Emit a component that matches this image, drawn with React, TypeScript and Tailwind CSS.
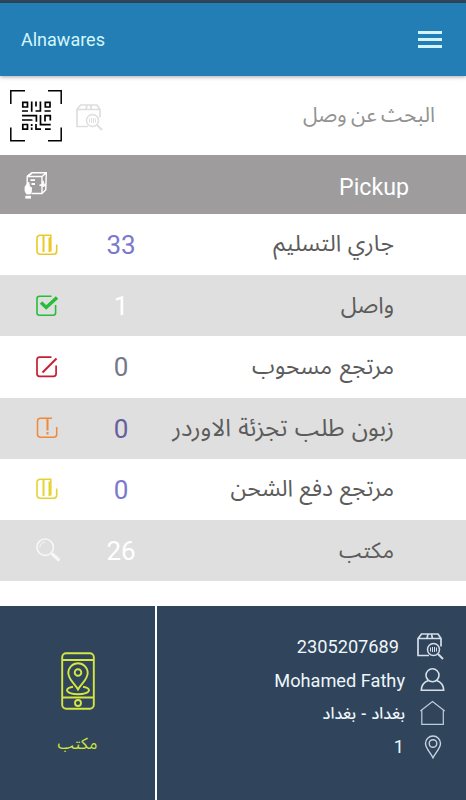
/**
 * Courier home screen: search bar, shipment status list and account footer.
 */

import type { ReactNode } from 'react';

type IconProps = { className?: string };

const QrScanIcon = ({ className = '' }: IconProps) => (
    <svg viewBox="0 0 52 52" className={className} fill="none" stroke="#000" strokeWidth="1.5">
        {/* Corner brackets */}
        <path d="M.8 14V.8H15M38 .8h13.200V14M51.200 37.500v13.200H38M15 50.700H.8V37.500" />
        {/* Code modules */}
        <g strokeWidth="1.700">
            <path d="M12.800 12.300h4.700v4.700h-4.700zM35.300 12.300h4.700v4.700h-4.700zM12.800 34.500h4.700v4.700h-4.700z" />
            <path d="M12 21h6M21.700 11.500v10.300M26 11.500v5M25.500 21h4.900V11.500M34.500 21h6.200" />
            <path d="M12 25.700h14.400v6M12 30h9.700v-.5M12 30h6M30.500 25v9.700h10.200M35 31.500v-5.800h5.300v4.800" />
            <path d="M21.700 34v2M21.700 37.500v2.500M26 34v5.200h5M35 39.200h5.700" />
        </g>
    </svg>
);

const BoxSearchIcon = ({ className = '' }: IconProps) => (
    <svg viewBox="0 0 28 28" className={className} fill="none" stroke="currentColor" strokeWidth="1.700">
        <path d="M13 23.500H2V6.500L5.500 2H22l3 4.500v8M2 6.500h23M11 6.500l1-4.500M16.500 6.500l-1-4.500" />
        <circle cx="17.500" cy="17.500" r="6" strokeWidth="1.500" />
        <path d="M22 22l5 5" strokeWidth="2" />
        <path d="M14.500 15.500v4M16.500 15v5M18.500 15v5M20.500 15.500v4" strokeWidth="1" />
    </svg>
);

const PickupIcon = ({ className = '' }: IconProps) => (
    <svg viewBox="0 0 24 28" className={className} fill="none" stroke="#fff" strokeWidth="1.400">
        <path d="M3.200 13V5.500L8 1.800h14.300l-.5 17L18 22.500H7.500M3.200 5.500H18l4.300-3.700M18 5.500v17" />
        <path d="M3.500 5.300L8 2M6.500 9.200h4.500M7.500 13H11M15.500 14.500l3-1M19 10v6M21 12.500v3" strokeWidth="1.800" />
        <path d="M1 16l2.500-4 1.500-.5.500 4 2 1v4L6.500 23H2.500L1 20z" fill="#fff" strokeWidth=".8" />
        <path d="M1.300 26.200h5.700" strokeWidth="2.800" />
    </svg>
);

const BarsBoxIcon = ({ className = '' }: IconProps) => (
    <svg viewBox="0 0 22 22" className={className} fill="none" stroke="currentColor" strokeWidth="1.600">
        <path d="M14.800 17.500V1.200H4.500Q1 1.200 1 4.700v12.100q0 3.500 3.500 3.500h13q3.200 0 3.200-3.200V10.500" />
        <path d="M7.500 1.200V18" strokeWidth="2" />
        <path d="M13.300 18V3.500" />
    </svg>
);

const CheckBoxIcon = ({ className = '' }: IconProps) => (
    <svg viewBox="0 0 22 22" className={className} fill="none" stroke="currentColor" strokeWidth="1.600">
        <path d="M15.500 1.200H3.500Q1 1.200 1 3.700v14.100q0 2.500 2.500 2.500h13.600q2.500 0 2.500-2.500V10" />
        <path d="M5 7.500l5.200 5L21 2.500" strokeWidth="3.400" />
    </svg>
);

const SlashBoxIcon = ({ className = '' }: IconProps) => (
    <svg viewBox="0 0 22 22" className={className} fill="none" stroke="currentColor" strokeWidth="1.700">
        <path d="M15.500 1.200H3.500Q1 1.200 1 3.700v14.100q0 2.500 2.500 2.500h14.100q2.500 0 2.500-2.500V9.500" />
        <path d="M6.500 16.500L20.500 2.500" strokeWidth="1.900" />
    </svg>
);

const AlertBoxIcon = ({ className = '' }: IconProps) => (
    <svg viewBox="0 0 22 22" className={className} fill="none" stroke="currentColor" strokeWidth="1.500">
        <path d="M16 1.200H4.500Q1.500 1.200 1.500 4.200v13.100q0 3 3 3h13.200q3 0 3-3V10" />
        <path d="M11.500 2v11.500M11.500 15v2.500" strokeWidth="2" />
    </svg>
);

const LensIcon = ({ className = '' }: IconProps) => (
    <svg viewBox="0 0 24 24" className={className} fill="none" stroke="currentColor" strokeWidth="1.600">
        <circle cx="9.200" cy="9.200" r="8.200" />
        <path d="M3.800 9.500Q4.300 4.800 9 4" strokeWidth="1" />
        <path d="M15 15l2 2" />
        <path d="M16.800 16.500l5.500 5" strokeWidth="3.400" strokeLinecap="round" />
    </svg>
);

const PhonePinIcon = ({ className = '' }: IconProps) => (
    <svg viewBox="0 0 34 58" className={className} fill="none" stroke="currentColor" strokeWidth="1.900">
        <rect x="1.200" y="1.200" width="31.600" height="55.600" rx="4" />
        <path d="M1.200 8h31.600M1.200 45.500h31.600" />
        <circle cx="17" cy="51" r="3" />
        <circle cx="17" cy="20.500" r="3.300" />
        <path d="M17 37.500C14 32 7.300 27.500 7.300 21a9.700 9.700 0 0 1 19.400 0C26.700 27.500 20 32 17 37.500z" />
        <path d="M12 34.700c-3.500.6-6 1.800-6 3.600 0 2.200 4.900 3.900 11 3.900s11-1.700 11-3.900c0-1.800-2.500-3-6-3.600" />
    </svg>
);

const UserIcon = ({ className = '' }: IconProps) => (
    <svg viewBox="0 0 26 26" className={className} fill="none" stroke="currentColor" strokeWidth="1.600">
        <circle cx="12.500" cy="8.300" r="6.500" />
        <path d="M8.500 13.500C4 15 1.500 18.500 1.300 23.200h22.400C23.500 18.500 21 15 16.500 13.500" />
    </svg>
);

const HomeIcon = ({ className = '' }: IconProps) => (
    <svg viewBox="0 0 26 26" className={className} fill="none" stroke="currentColor" strokeWidth="1.200">
        <path d="M.3 11L12.500 1.500 24.700 11M1.800 9.800v14.500h21.500V9.800" />
    </svg>
);

const PinIcon = ({ className = '' }: IconProps) => (
    <svg viewBox="0 0 18 24" className={className} fill="none" stroke="currentColor" strokeWidth="1.400">
        <path d="M9 22.800C7 18 1.500 13.500 1.500 8.500a7.500 7.500 0 0 1 15 0C16.500 13.500 11 18 9 22.800z" />
        <circle cx="9" cy="8.500" r="3.800" />
    </svg>
);

interface StatusRow {
    label: string;
    count: number;
    labelClass: string;
    countClass: string;
    icon: ReactNode;
}

const rows: StatusRow[] = [
    { label: 'جاري التسليم', count: 33, labelClass: 'text-[23px] [word-spacing:1px]', countClass: 'text-[#7b78cf]', icon: <BarsBoxIcon className="size-[22px] text-[#ecc928]" /> },
    { label: 'واصل', count: 1, labelClass: 'text-[23px]', countClass: 'text-white', icon: <CheckBoxIcon className="size-[22px] text-[#27bd3b]" /> },
    { label: 'مرتجع مسحوب', count: 0, labelClass: 'text-[23px] [word-spacing:2px]', countClass: 'text-[#77778a]', icon: <SlashBoxIcon className="size-[22px] text-[#c61f31]" /> },
    { label: 'زبون طلب تجزئة الاوردر', count: 0, labelClass: 'text-[24px] [word-spacing:1.3px]', countClass: 'text-[#65609c]', icon: <AlertBoxIcon className="size-[22px] text-[#ee8a3a]" /> },
    { label: 'مرتجع دفع الشحن', count: 0, labelClass: 'text-[23px] [word-spacing:1px]', countClass: 'text-[#7b78cf]', icon: <BarsBoxIcon className="size-[22px] text-[#e3d433]" /> },
    { label: 'مكتب', count: 26, labelClass: 'text-[22px]', countClass: 'text-white', icon: <LensIcon className="size-6 text-[#f7f7f7]" /> },
];

export default function App() {
    return (
        <div className="flex h-[800px] w-[466px] flex-col overflow-hidden bg-white font-[Roboto,'Noto_Sans_Arabic','DejaVu_Sans',sans-serif]">
            <div className="h-[3px] shrink-0 bg-[#30465c]" />
            <header className="z-10 flex h-[73px] shrink-0 items-center justify-between bg-[#227eb4] pr-6 pl-[21px] shadow-[0_1px_4px_rgba(0,0,0,0.35)]">
                <h1 className="text-[18px] text-[#d3f6fb]">Alnawares</h1>
                <div className="flex w-6 flex-col gap-1">
                    <span className="h-[3px] bg-[#d3f4fb]" />
                    <span className="h-[3px] bg-[#d3f4fb]" />
                    <span className="h-[3px] bg-[#d3f4fb]" />
                </div>
            </header>

            {/* Search */}
            <div className="flex h-[79px] shrink-0 items-center pr-[31px] pl-[10px]">
                <QrScanIcon className="size-[52px]" />
                <BoxSearchIcon className="mt-[2px] ml-[13px] size-7 text-[#dedede]" />
                <span dir="rtl" className="ml-auto text-[21px] text-[#929292] [word-spacing:-1px]">البحث عن وصل</span>
            </div>

            <div className="flex h-[59px] shrink-0 items-center justify-between bg-[#9e9c9d] pr-[57px] pl-6">
                <PickupIcon className="h-7 w-6" />
                <span className="mt-[2px] h-[25px] overflow-hidden text-[23.200px] leading-[29px] text-white">Pickup</span>
            </div>

            {/* Status list */}
            <ul className="flex h-[367px] shrink-0 flex-col">
                {rows.map((row) => (
                    <li key={row.label} className="flex flex-1 items-center pr-[72px] pl-9 even:bg-[#dfdfdf]">
                        <span className="w-6">{row.icon}</span>
                        <span className={`mt-[2px] ml-[31px] w-[60px] text-center text-[26px] ${row.countClass}`}>{row.count}</span>
                        <span dir="rtl" className={`ml-auto whitespace-nowrap text-[#5c5c5c] ${row.labelClass}`}>{row.label}</span>
                    </li>
                ))}
            </ul>

            {/* Account footer */}
            <footer className="mt-auto flex h-[194px] shrink-0 bg-[#30455b]">
                <div className="flex w-[157px] flex-col items-center border-r-2 border-white pt-[46px] text-[#d4e63f]">
                    <PhonePinIcon className="h-[58px] w-[34px]" />
                    <span dir="rtl" className="mt-[22px] text-[16px]">مكتب</span>
                </div>
                <div className="flex flex-1 flex-col pt-[24px] pr-5 text-[18.200px] text-[#eef6fb]">
                    <div className="flex h-[34px] items-center justify-end gap-[17px]">
                        <span>2305207689</span>
                        <BoxSearchIcon className="mr-[2px] mb-[2px] size-7 text-[#d5deea]" />
                    </div>
                    <div className="flex h-[34px] items-center justify-end gap-[15px]">
                        <span>Mohamed Fathy</span>
                        <UserIcon className="mb-[2px] size-[26px] text-[#d5deea]" />
                    </div>
                    <div className="flex h-[32px] items-center justify-end gap-[15px]">
                        <span dir="rtl" className="text-[16px] font-medium [word-spacing:1px]">بغداد - بغداد</span>
                        <HomeIcon className="mb-[2px] size-[26px] text-[#c0ccdb]" />
                    </div>
                    <div className="flex h-[34px] items-center justify-end gap-[20px]">
                        <span>1</span>
                        <PinIcon className="mr-[4px] h-6 w-[18px] text-[#c8d3e0]" />
                    </div>
                </div>
            </footer>
        </div>
    );
}
